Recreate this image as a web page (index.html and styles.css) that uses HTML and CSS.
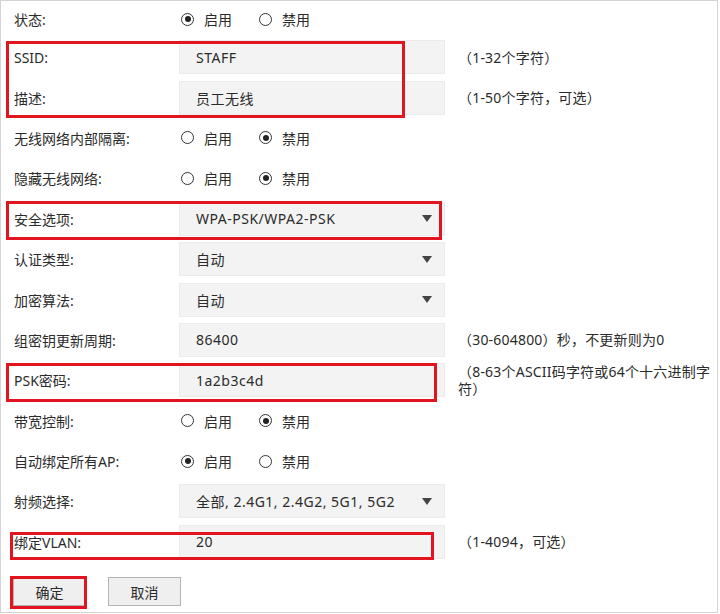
FILE: index.html
```html
<!DOCTYPE html>
<html lang="zh-CN">
<head>
    <meta charset="UTF-8">
    <title>无线网络设置</title>
    <meta name="viewport" content="width=device-width, initial-scale=1.0">
    <link rel="stylesheet" href="styles.css">
</head>
<body>
    <div class="page">
        <form class="form">
            <div class="row first">
                <label class="label">状态:</label>
                <div class="radios">
                    <span class="opt"><span class="radio on"></span>启用</span>
                    <span class="opt"><span class="radio"></span>禁用</span>
                </div>
            </div>
            <div class="row">
                <label class="label">SSID:</label>
                <div class="field">STAFF</div>
                <span class="hint">（1-32个字符）</span>
            </div>
            <div class="row">
                <label class="label">描述:</label>
                <div class="field">员工无线</div>
                <span class="hint">（1-50个字符，可选）</span>
            </div>
            <div class="row">
                <label class="label">无线网络内部隔离:</label>
                <div class="radios">
                    <span class="opt"><span class="radio"></span>启用</span>
                    <span class="opt"><span class="radio on"></span>禁用</span>
                </div>
            </div>
            <div class="row">
                <label class="label">隐藏无线网络:</label>
                <div class="radios">
                    <span class="opt"><span class="radio"></span>启用</span>
                    <span class="opt"><span class="radio on"></span>禁用</span>
                </div>
            </div>
            <div class="row">
                <label class="label">安全选项:</label>
                <div class="field select">WPA-PSK/WPA2-PSK<span class="arrow"></span></div>
            </div>
            <div class="row">
                <label class="label">认证类型:</label>
                <div class="field select">自动<span class="arrow"></span></div>
            </div>
            <div class="row">
                <label class="label">加密算法:</label>
                <div class="field select">自动<span class="arrow"></span></div>
            </div>
            <div class="row">
                <label class="label">组密钥更新周期:</label>
                <div class="field">86400</div>
                <span class="hint">（30-604800）秒，不更新则为0</span>
            </div>
            <div class="row">
                <label class="label">PSK密码:</label>
                <div class="field">1a2b3c4d</div>
                <span class="hint">（8-63个ASCII码字符或64个十六进制字符）</span>
            </div>
            <div class="row">
                <label class="label">带宽控制:</label>
                <div class="radios">
                    <span class="opt"><span class="radio"></span>启用</span>
                    <span class="opt"><span class="radio on"></span>禁用</span>
                </div>
            </div>
            <div class="row">
                <label class="label">自动绑定所有AP:</label>
                <div class="radios">
                    <span class="opt"><span class="radio on"></span>启用</span>
                    <span class="opt"><span class="radio"></span>禁用</span>
                </div>
            </div>
            <div class="row">
                <label class="label">射频选择:</label>
                <div class="field select">全部, 2.4G1, 2.4G2, 5G1, 5G2<span class="arrow"></span></div>
            </div>
            <div class="row">
                <label class="label">绑定VLAN:</label>
                <div class="field">20</div>
                <span class="hint">（1-4094，可选）</span>
            </div>
            <div class="actions">
                <button type="button" class="btn">确定</button>
                <button type="button" class="btn">取消</button>
            </div>

            <!-- red annotation boxes drawn over the form -->
            <div class="mark mark-ssid"></div>
            <div class="mark mark-sec"></div>
            <div class="mark mark-psk"></div>
            <div class="mark mark-vlan"></div>
            <div class="mark mark-ok"></div>
        </form>
    </div>
</body>
</html>
```

FILE: styles.css
```css
body {
    margin: 0;
    background: #fff;
    font-family: "Noto Sans", "Noto Sans CJK SC", sans-serif;
    font-size: 14px;
    color: #2b2b2b;
}

.page {
    width: 716px;
    height: 611px;
    border: 1px solid #d4d4d4;
    overflow: hidden;
}

.form {
    position: relative;
    height: 100%;
}

.row {
    display: flex;
    align-items: center;
    height: 40.4px;
    padding-left: 13px;
}

    .row.first {
        height: 36px;
    }

.label {
    width: 165px;
    flex-shrink: 0;
}

.field {
    box-sizing: border-box;
    width: 266px;
    height: 34px;
    flex-shrink: 0;
    display: flex;
    align-items: center;
    padding: 0 12px 0 16px;
    background: #f3f3f3;
    border: 1px solid #ebebeb;
    letter-spacing: 0.5px;
}

    .field.select {
        justify-content: space-between;
    }

.arrow {
    width: 0;
    height: 0;
    border-left: 5px solid transparent;
    border-right: 5px solid transparent;
    border-top: 7px solid #444;
}

.hint {
    margin-left: 13px;
    width: 255px;
    line-height: 17px;
    letter-spacing: 0.2px;
}

.radios {
    display: flex;
    align-items: center;
    margin-left: 2px;
}

.opt {
    display: flex;
    align-items: center;
    margin-right: 27px;
}

.radio {
    box-sizing: border-box;
    width: 13px;
    height: 13px;
    border: 1.5px solid #333;
    border-radius: 50%;
    margin-right: 10px;
    display: flex;
    align-items: center;
    justify-content: center;
}

    .radio.on::after {
        content: "";
        width: 6px;
        height: 6px;
        border-radius: 50%;
        background: #222;
    }

.actions {
    display: flex;
    gap: 22px;
    padding: 15px 0 0 12px;
}

.btn {
    width: 73px;
    height: 29px;
    background: #efefef;
    border: 1px solid #b4b4b4;
    border-radius: 0;
    font-family: inherit;
    font-size: 14px;
    color: #2b2b2b;
    padding: 0;
}

.mark {
    position: absolute;
    box-sizing: border-box;
    border: 3px solid #e1141f;
    pointer-events: none;
}

.mark-ssid {
    left: 5px;
    top: 40px;
    width: 399px;
    height: 77px;
}

.mark-sec {
    left: 5px;
    top: 200px;
    width: 436px;
    height: 39px;
}

.mark-psk {
    left: 5px;
    top: 362px;
    width: 431px;
    height: 39px;
}

.mark-vlan {
    left: 9px;
    top: 531px;
    width: 424px;
    height: 28px;
}

.mark-ok {
    left: 9px;
    top: 575px;
    width: 77px;
    height: 33px;
}
```
